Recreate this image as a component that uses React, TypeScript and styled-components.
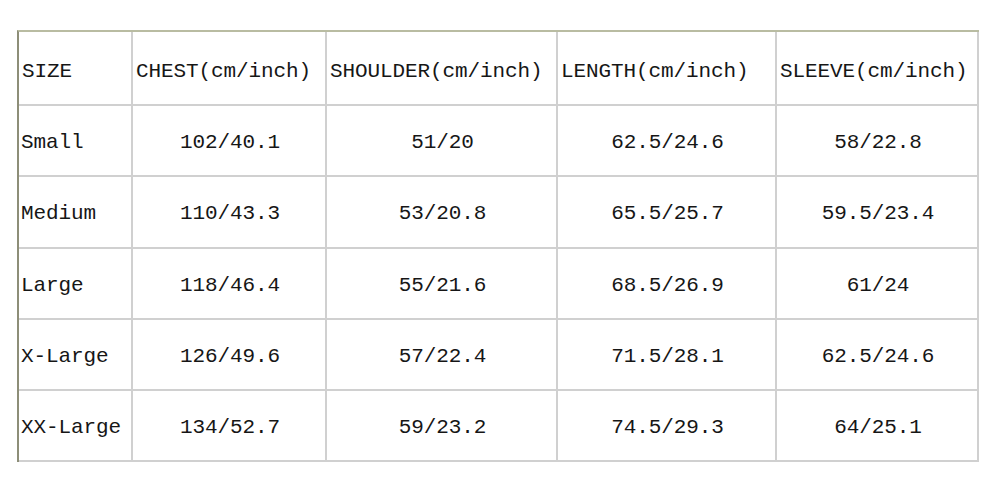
import React from 'react';
import styled, { createGlobalStyle } from 'styled-components';

interface SizeRow {
  size: string;
  chest: string;
  shoulder: string;
  length: string;
  sleeve: string;
}

const headers = [
  'SIZE',
  'CHEST(cm/inch)',
  'SHOULDER(cm/inch)',
  'LENGTH(cm/inch)',
  'SLEEVE(cm/inch)',
];

const rows: SizeRow[] = [
  { size: 'Small', chest: '102/40.1', shoulder: '51/20', length: '62.5/24.6', sleeve: '58/22.8' },
  { size: 'Medium', chest: '110/43.3', shoulder: '53/20.8', length: '65.5/25.7', sleeve: '59.5/23.4' },
  { size: 'Large', chest: '118/46.4', shoulder: '55/21.6', length: '68.5/26.9', sleeve: '61/24' },
  { size: 'X-Large', chest: '126/49.6', shoulder: '57/22.4', length: '71.5/28.1', sleeve: '62.5/24.6' },
  { size: 'XX-Large', chest: '134/52.7', shoulder: '59/23.2', length: '74.5/29.3', sleeve: '64/25.1' },
];

const App = () => {
  return (
    <>
      <GlobalStyle />
      <Page>
        <Chart>
          {headers.map(title => (
            <HeadCell key={title}>{title}</HeadCell>
          ))}
          {rows.map(row => (
            <React.Fragment key={row.size}>
              <Cell $align='left'>{row.size}</Cell>
              <Cell $align='center'>{row.chest}</Cell>
              <Cell $align='center'>{row.shoulder}</Cell>
              <Cell $align='center'>{row.length}</Cell>
              <Cell $align='center'>{row.sleeve}</Cell>
            </React.Fragment>
          ))}
        </Chart>
      </Page>
    </>
  );
};

const GlobalStyle = createGlobalStyle`
  body {
    margin: 0;
    background: #ffffff;
  }
`;

const Page = styled.div`
  width: 1001px;
  height: 500px;
  padding: 30px 0 0 17px;
  box-sizing: border-box;
  background: #ffffff;
`;

const Chart = styled.div`
  display: grid;
  grid-template-columns: 114px 194px 231px 219px 202px;
  grid-template-rows: 74px 71px 72px 71px 71px 71px;
  width: max-content;
  border-top: 2px solid #b9bca2;
  border-left: 2px solid #8d8e78;
  font-family: 'Liberation Mono', 'Courier New', monospace;
  font-size: 21px;
  color: #161616;
`;

const Cell = styled.div<{ $align: 'left' | 'center' }>`
  display: flex;
  align-items: center;
  justify-content: ${p => (p.$align === 'left' ? 'flex-start' : 'center')};
  padding: 3px 0 0 2px;
  box-sizing: border-box;
  border-right: 2px solid #d0d0d0;
  border-bottom: 2px solid #d0d0d0;
  white-space: nowrap;
  letter-spacing: -0.1px;
`;

const HeadCell = styled(Cell).attrs({ $align: 'left' as const })`
  padding: 6px 0 0 3px;
`;

export default App;
